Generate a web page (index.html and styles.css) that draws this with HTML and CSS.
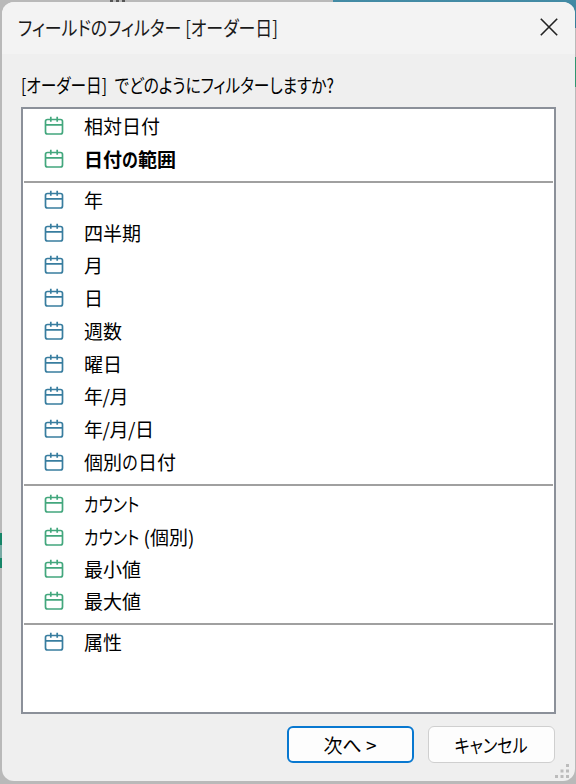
FILE: index.html
```html
<!DOCTYPE html>
<html lang="ja">
<head>
  <meta charset="UTF-8" />
  <meta name="viewport" content="width=device-width, initial-scale=1.0" />
  <title>フィールドのフィルター</title>
  <link rel="stylesheet" href="styles.css">
</head>
<body>
  <svg class="defs" width="0" height="0">
    <symbol id="calendar" viewBox="0 0 20 20">
      <path d="M3.500 3.500h13q2 0 2 2v10.500q0 2-2 2h-13q-2 0-2-2v-10.500q0-2 2-2zM1.500 8.800h17M6.800 .7v5M13.200 .7v5" />
    </symbol>
  </svg>

  <div class="dialog">
    <div class="titlebar">
      <span class="title"><span class="fit" data-width="260">フィールドのフィルター [オーダー日]</span></span>
      <svg class="close" viewBox="0 0 18 18"><path d="M.8.8l16.400 16.400M17.200.8L.8 17.200" /></svg>
    </div>

    <div class="content">
      <div class="question"><span class="fit" data-width="313">[オーダー日] でどのようにフィルターしますか?</span></div>

      <div class="list">
        <div class="group green">
          <div class="row"><svg><use href="#calendar" /></svg><span>相対日付</span></div>
          <div class="row selected"><svg><use href="#calendar" /></svg><span>日付<i class="no">の</i>範囲</span></div>
        </div>
        <div class="group blue">
          <div class="row"><svg><use href="#calendar" /></svg><span>年</span></div>
          <div class="row"><svg><use href="#calendar" /></svg><span>四半期</span></div>
          <div class="row"><svg><use href="#calendar" /></svg><span>月</span></div>
          <div class="row"><svg><use href="#calendar" /></svg><span>日</span></div>
          <div class="row"><svg><use href="#calendar" /></svg><span>週数</span></div>
          <div class="row"><svg><use href="#calendar" /></svg><span>曜日</span></div>
          <div class="row"><svg><use href="#calendar" /></svg><span class="slashes">年/月</span></div>
          <div class="row"><svg><use href="#calendar" /></svg><span class="slashes">年/月/日</span></div>
          <div class="row"><svg><use href="#calendar" /></svg><span>個別<i class="no">の</i>日付</span></div>
        </div>
        <div class="group green counts">
          <div class="row"><svg><use href="#calendar" /></svg><span><i class="fit" data-width="55">カウント</i></span></div>
          <div class="row"><svg><use href="#calendar" /></svg><span><i class="fit" data-width="55">カウント</i> (個別)</span></div>
          <div class="row"><svg><use href="#calendar" /></svg><span>最小値</span></div>
          <div class="row"><svg><use href="#calendar" /></svg><span>最大値</span></div>
        </div>
        <div class="group blue">
          <div class="row"><svg><use href="#calendar" /></svg><span>属性</span></div>
        </div>
      </div>

      <div class="buttons">
        <button class="primary"><span class="fit" data-width="53">次へ &gt;</span></button>
        <button><span class="fit" data-width="73">キャンセル</span></button>
      </div>
    </div>

    <svg class="grip" viewBox="0 0 15 15">
      <path d="M11 0h3v3h-3zM5.500 5.500h3v3h-3zM11 5.500h3v3h-3zM0 11h3v3h-3zM5.500 11h3v3h-3zM11 11h3v3h-3z" />
    </svg>
  </div>

  <script>
    document.querySelectorAll('.fit').forEach((el) => {
      const natural = el.offsetWidth;
      const width = Number(el.dataset.width);
      el.style.transform = `scaleX(${width / natural})`;
      if (el.tagName === 'I') {
        el.style.marginRight = `${width - natural}px`;
      }
    });
  </script>
</body>
</html>
```
FILE: styles.css
```css
* {
  box-sizing: border-box;
}
body {
  margin: 0;
  height: 784px;
  padding: 2px 1px 3px 2px;
  overflow: hidden;
  background:
    linear-gradient(#438ba5, #357b96) 333px 0 / 243px 28px no-repeat,
    linear-gradient(#2f9670, #2f9670) 575px 57px / 1px 30px no-repeat,
    linear-gradient(#168568 0 12px, #78aaa4 12px 25px, #168568 25px) 0 533px / 2px 35px no-repeat,
    repeating-linear-gradient(90deg, #555 0 3px, #b9b9b9 3px 6px) 110px 0 / 15px 2px no-repeat,
    #b9b9b9;
  font-family: "Noto Sans CJK JP", sans-serif;
  font-size: 19px;
  color: #000;
}
.defs {
  position: absolute;
}
.dialog {
  position: relative;
  height: 779px;
  background: #efefef;
  border-radius: 12px;
  overflow: hidden;
}
.titlebar {
  display: flex;
  align-items: center;
  justify-content: space-between;
  height: 52px;
  padding: 0 17px 2px 16px;
  background: #f3f3f3;
}
.title {
  font-size: 20px;
  color: #1a1a1a;
}
.fit {
  display: inline-block;
  white-space: nowrap;
  transform-origin: left;
  font-feature-settings: "palt";
}
.close {
  width: 18px;
  height: 18px;
  fill: none;
  stroke: #222;
  stroke-width: 1.600;
}
.content {
  padding: 0 19px;
}
.question {
  height: 53px;
  padding-top: 16px;
  line-height: 30px;
  word-spacing: 5px;
}
.list {
  width: 535px;
  height: 607px;
  padding: 1px 1px;
  background: #fff;
  border: 2px solid #8b9099;
}
.group + .group {
  margin-top: 5px;
  padding-top: 2px;
  border-top: 2px solid #a0a0a0;
}
.group.green + .group.blue {
  padding-top: 1px;
}
.group.blue + .group.green {
  margin-top: 6px;
}
.row {
  display: flex;
  align-items: center;
  height: 32.750px;
  padding-left: 20px;
  white-space: nowrap;
}
.counts .row {
  height: 32.350px;
}
.row svg {
  width: 20px;
  height: 20px;
  margin-right: 20px;
  fill: none;
  stroke-width: 1.700;
}
.row span {
  padding-bottom: 1px;
}
.row i {
  display: inline-block;
  font-style: normal;
  transform-origin: left;
}
.green svg {
  stroke: #43a77d;
}
.blue svg {
  stroke: #387d9f;
}
.selected {
  font-weight: bold;
}
.no {
  transform: scaleX(.84);
  margin-right: -3px;
}
.slashes {
  letter-spacing: -.5px;
}
.buttons {
  display: flex;
  justify-content: flex-end;
  gap: 14px;
  padding: 12px 1.500px 0 0;
}
button {
  width: 127px;
  height: 37px;
  padding: 0;
  background: #fdfdfd;
  border: 1px solid #cfcfcf;
  border-radius: 6px;
  font: inherit;
  color: inherit;
}
button .fit {
  transform-origin: center;
}
.primary {
  border: 2px solid #0878d0;
}
.grip {
  position: absolute;
  right: 5px;
  bottom: 2px;
  width: 15px;
  height: 15px;
  fill: #bcbcbc;
}
```
